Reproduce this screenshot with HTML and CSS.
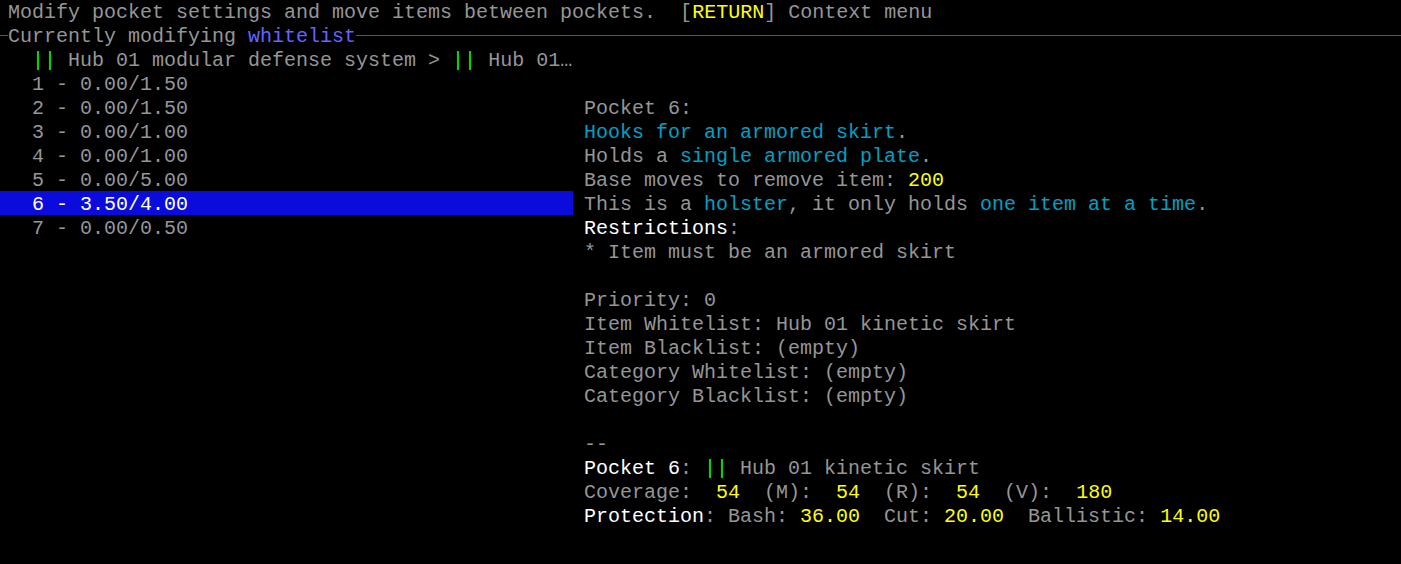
FILE: index.html
```html
<!DOCTYPE html>
<html>
<head>
    <title>Pocket settings</title>
    <link rel="stylesheet" href="styles.css">
</head>
<body>
    <div class="screen">
        <div class="row header"><span class="g">Modify pocket settings and move items between pockets.  [</span><span class="y">RETURN</span><span class="g">] Context menu</span></div>

        <div class="row title">
            <div class="rule rule-short"></div>
            <span class="g">Currently modifying </span><span class="lb">whitelist</span>
            <div class="rule"></div>
        </div>

        <div class="panes">
            <div class="pocket-list">
                <div class="row crumb">  <span class="lg">||</span> Hub 01 modular defense system &gt; <span class="lg">||</span> Hub 01…</div>
                <div class="row item">  1 - 0.00/1.50</div>
                <div class="row item">  2 - 0.00/1.50</div>
                <div class="row item">  3 - 0.00/1.00</div>
                <div class="row item">  4 - 0.00/1.00</div>
                <div class="row item">  5 - 0.00/5.00</div>
                <div class="row item selected">  6 - 3.50/4.00</div>
                <div class="row item">  7 - 0.00/0.50</div>
            </div>

            <div class="pocket-info">
                <div class="row g">Pocket 6:</div>
                <div class="row"><span class="c">Hooks for an armored skirt</span><span class="g">.</span></div>
                <div class="row g">Holds a <span class="c">single armored plate</span>.</div>
                <div class="row g">Base moves to remove item: <span class="y">200</span></div>
                <div class="row g">This is a <span class="c">holster</span>, it only holds <span class="c">one item at a time</span>.</div>
                <div class="row"><span class="w">Restrictions</span><span class="g">:</span></div>
                <div class="row g">* Item must be an armored skirt</div>
                <div class="row"></div>
                <div class="row g">Priority: 0</div>
                <div class="row g">Item Whitelist: Hub 01 kinetic skirt</div>
                <div class="row g">Item Blacklist: (empty)</div>
                <div class="row g">Category Whitelist: (empty)</div>
                <div class="row g">Category Blacklist: (empty)</div>
                <div class="row"></div>
                <div class="row g">--</div>
                <div class="row"><span class="w">Pocket 6</span><span class="g">: </span><span class="lg">||</span><span class="g"> Hub 01 kinetic skirt</span></div>
                <div class="row g">Coverage:  <span class="y">54</span>  (M):  <span class="y">54</span>  (R):  <span class="y">54</span>  (V):  <span class="y">180</span></div>
                <div class="row g"><span class="w">Protection</span>: Bash: <span class="y">36.00</span>  Cut: <span class="y">20.00</span>  Ballistic: <span class="y">14.00</span></div>
            </div>
        </div>
    </div>
</body>
</html>
```

FILE: styles.css
```css
html, body {
    margin: 0;
    padding: 0;
    background-color: #000;
    height: 100%;
    overflow: hidden;
}

.screen {
    margin-top: -1px;
    font-family: "Liberation Mono", "DejaVu Sans Mono", monospace;
    font-size: 20px;
    color: #969696;
}

/* one terminal cell row: 24px tall, glyphs sit a little low */
.row {
    height: 24px;
    line-height: 28px;
    white-space: pre;
}

.header {
    padding-left: 8px;
}

.title {
    display: flex;
    align-items: center;
}

.title span {
    align-self: stretch;
}

.rule {
    flex: 1;
    height: 1px;
    background-color: #8b3a62;
    margin-top: 1px;
}

.rule-short {
    flex: 0 0 8px;
}

.panes {
    display: grid;
    grid-template-columns: 574px 1fr;
    column-gap: 10px;
}

.pocket-list .row {
    padding-left: 8px;
}

.item.selected {
    background-color: #0b0bdc;
    color: #fff;
    width: 565px;
}

.pocket-info {
    padding-top: 48px;
}

/* terminal colours */
.g { color: #969696; }
.w { color: #fff; }
.c { color: #00a0c4; }
.y { color: #ffff00; }
.lg { color: #00ff00; }
.lb { color: #6464ff; }
```
